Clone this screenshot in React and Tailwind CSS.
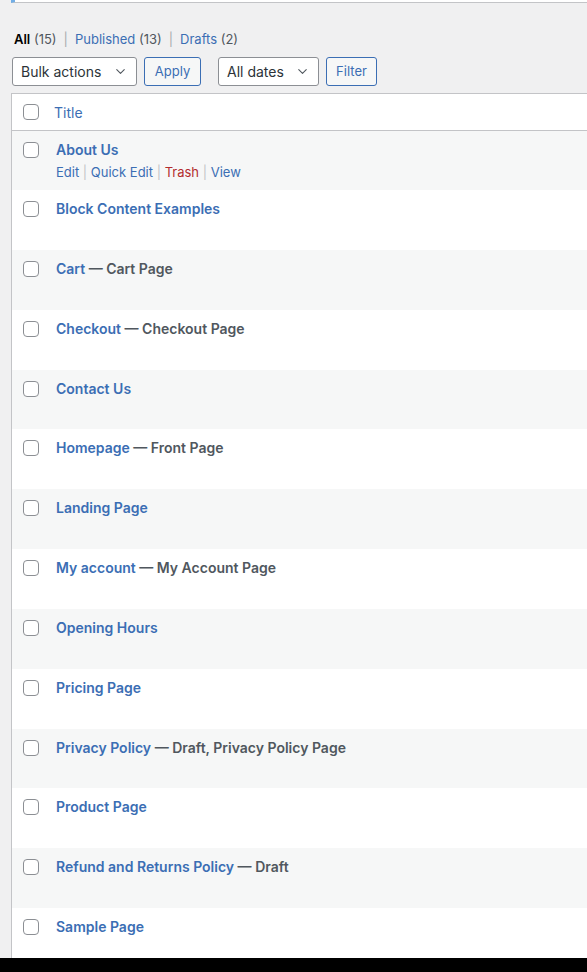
import { ChevronDown } from 'lucide-react';

const pages = [
  { title: 'About Us', actions: true },
  { title: 'Block Content Examples' },
  { title: 'Cart', state: 'Cart Page' },
  { title: 'Checkout', state: 'Checkout Page' },
  { title: 'Contact Us' },
  { title: 'Homepage', state: 'Front Page' },
  { title: 'Landing Page' },
  { title: 'My account', state: 'My Account Page' },
  { title: 'Opening Hours' },
  { title: 'Pricing Page' },
  { title: 'Privacy Policy', state: 'Draft, Privacy Policy Page' },
  { title: 'Product Page' },
  { title: 'Refund and Returns Policy', state: 'Draft' },
  { title: 'Sample Page' },
];

function Checkbox() {
  return <span className="block w-4 h-4 rounded-[4px] border border-[#8c8f94] bg-white" />;
}

function Select({ label, width }) {
  return (
    <div className={`flex items-center justify-between h-[29px] pl-[8px] pr-[8px] rounded-[3px] border border-[#8c8f94] bg-white text-[14px] text-[#2c3338] ${width}`}>
      <span>{label}</span>
      <ChevronDown size={15} strokeWidth={1.75} className="text-[#50575e]" />
    </div>
  );
}

function Button({ label, width }) {
  return (
    <div className={`flex items-center justify-center h-[29px] rounded-[3px] border border-[#3b6eb4] bg-[#f6f7f7] text-[13px] text-[#3b6eb4] ${width}`}>
      {label}
    </div>
  );
}

function Row({ page, striped, first }) {
  return (
    <div className={`flex ${first ? 'h-[59px]' : 'h-[59.85px]'} ${striped ? 'bg-[#f6f7f7]' : 'bg-white'}`}>
      <div className="w-[44px] pl-[11px] pt-[11px]">
        <Checkbox />
      </div>
      <div className="pt-[8px]">
        <p className="text-[14px] leading-[21px] font-semibold">
          <span className="text-[#3b6eb4]">{page.title}</span>
          {page.state && <span className="text-[#50575e]"> — {page.state}</span>}
        </p>
        {page.actions && (
          <p className="pt-[3px] text-[13px] leading-[19px] text-[#c3c4c7]">
            <span className="text-[#3b6eb4]">Edit</span> | <span className="text-[#3b6eb4]">Quick Edit</span> | <span className="text-[#b32d2e]">Trash</span> | <span className="text-[#3b6eb4]">View</span>
          </p>
        )}
      </div>
    </div>
  );
}

export default function App() {
  return (
    <div className="w-[587px] h-[972px] overflow-hidden bg-[#f0f0f1]" style={{ fontFamily: 'Inter, "Noto Sans", sans-serif' }}>
      <div className="h-[958px] overflow-hidden">
        <div className="ml-[11px] h-[3px] border-l-4 border-[#72aee6] border-b border-b-[#c3c4c7] bg-white" />

        <div className="pl-[14px] pt-[26px] text-[13px] leading-[20px] text-[#a7aaad]">
          <span className="font-semibold text-black">All</span> <span className="text-[#50575e]">(15)</span>
          <span className="mx-[7px]">|</span>
          <span className="text-[#3b6eb4]">Published</span> <span className="text-[#50575e]">(13)</span>
          <span className="mx-[7px]">|</span>
          <span className="text-[#3b6eb4]">Drafts</span> <span className="text-[#50575e]">(2)</span>
        </div>

        <div className="flex items-center pl-[12px] pt-[8px]">
          <Select label="Bulk actions" width="w-[125px]" />
          <div className="ml-[7px]"><Button label="Apply" width="w-[57px]" /></div>
          <div className="ml-[17px]"><Select label="All dates" width="w-[101px]" /></div>
          <div className="ml-[7px]"><Button label="Filter" width="w-[51px]" /></div>
        </div>

        <div className="mt-[7px] ml-[11px] w-[600px] border border-[#c3c4c7] bg-white">
          <div className="flex items-center h-[37px] border-b border-[#c3c4c7]">
            <div className="w-[42px] pl-[11px]">
              <Checkbox />
            </div>
            <span className="text-[14px] text-[#3b6eb4]">Title</span>
          </div>
          {pages.map((p, i) => (
            <Row key={p.title} page={p} striped={i % 2 === 0} first={i === 0} />
          ))}
        </div>
      </div>
      <div className="h-[14px] bg-black" />
    </div>
  );
}
